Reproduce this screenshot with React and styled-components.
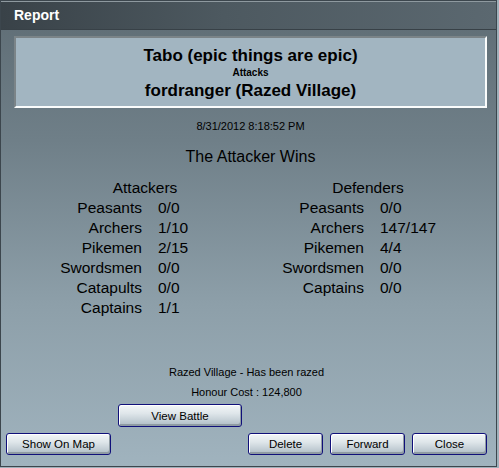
import React from "react";
import styled, { createGlobalStyle } from "styled-components";

const GlobalStyle = createGlobalStyle`
  html, body {
    margin: 0;
    padding: 0;
    background: #9fb0ba;
  }
  body {
    font-family: "Liberation Sans", Arial, sans-serif;
  }
`;

const Window = styled.div`
  box-sizing: border-box;
  width: 497px;
  height: 467px;
  border: 1px solid #3c464d;
  background: linear-gradient(#5e6c74 0%, #6f7f88 30%, #8d9fa9 65%, #a0b3be 100%);
  display: flex;
  flex-direction: column;
  overflow: hidden;
`;

const TitleBar = styled.div`
  box-sizing: border-box;
  height: 29px;
  flex: none;
  border-top: 1px solid #8e999f;
  border-bottom: 1px solid #384147;
  background: linear-gradient(90deg, #394248 0%, #4d5960 45%, #5b6870 100%);
  color: #fff;
  font-weight: bold;
  font-size: 14px;
  line-height: 27px;
  padding-left: 13px;
`;

const Body = styled.div`
  flex: 1;
  display: flex;
  flex-direction: column;
  padding: 6px 9px 0 13px;
`;

const HeaderBox = styled.div`
  box-sizing: border-box;
  height: 72px;
  border: 2px solid;
  border-color: #7b8488 #fafcfc #fafcfc #7b8488;
  background: #a2b5c1;
  display: flex;
  flex-direction: column;
  align-items: center;
  padding-top: 8px;
  color: #000;
  font-weight: bold;
`;

const Player = styled.div`
  font-size: 17px;
  line-height: 20px;
`;

const Verb = styled.div`
  font-size: 10px;
  line-height: 16px;
  margin-top: -1px;
`;

const Centered = styled.div`
  text-align: center;
  color: #000;
  font-size: ${(p) => p.size}px;
  line-height: ${(p) => p.line}px;
  margin-top: ${(p) => p.top || 0}px;
  padding-right: ${(p) => p.shift || 0}px;
`;

const Stats = styled.div`
  display: flex;
  align-items: flex-start;
  margin-top: 11px;
  padding-left: ${(p) => p.left}px;
  gap: 50px;
`;

const Side = styled.div`
  display: grid;
  grid-template-columns: ${(p) => p.label}px ${(p) => p.value}px;
  grid-auto-rows: 20px;
  column-gap: 16px;
  font-size: 15.5px;
  line-height: 20px;
  color: #000;
`;

const SideTitle = styled.div`
  grid-column: 1 / -1;
  text-align: center;
`;

const Label = styled.div`
  text-align: right;
  white-space: nowrap;
`;

const Value = styled.div`
  white-space: nowrap;
`;

const Footer = styled.div`
  margin-top: auto;
  display: flex;
  flex-direction: column;
  padding-bottom: 11px;
`;

const ButtonRow = styled.div`
  display: flex;
  align-items: center;
  gap: 7px;
  margin-top: ${(p) => p.top || 0}px;
  margin-left: ${(p) => p.left || 0}px;
`;

const Spacer = styled.div`
  flex: 1;
`;

const Button = styled.button`
  box-sizing: border-box;
  width: ${(p) => p.w}px;
  height: ${(p) => p.h || 22}px;
  padding: 0;
  border: 1px solid #10107a;
  border-radius: 3px;
  background: linear-gradient(#f3f6f8 0%, #dfe6ea 40%, #c3ced5 75%, #aebbc3 100%);
  box-shadow: inset 1px 1px 0 #ffffff, inset -1px -2px 0 #8f9ba3;
  font-family: "Liberation Sans", Arial, sans-serif;
  font-size: 11.5px;
  color: #000;
  cursor: pointer;
`;

const attackers = [
  ["Peasants", "0/0"],
  ["Archers", "1/10"],
  ["Pikemen", "2/15"],
  ["Swordsmen", "0/0"],
  ["Catapults", "0/0"],
  ["Captains", "1/1"],
];

const defenders = [
  ["Peasants", "0/0"],
  ["Archers", "147/147"],
  ["Pikemen", "4/4"],
  ["Swordsmen", "0/0"],
  ["Captains", "0/0"],
];

function Army({ title, rows, label, value }) {
  return (
    <Side label={label} value={value}>
      <SideTitle>{title}</SideTitle>
      {rows.map(([name, count]) => (
        <React.Fragment key={name}>
          <Label>{name}</Label>
          <Value>{count}</Value>
        </React.Fragment>
      ))}
    </Side>
  );
}

export default function App() {
  return (
    <>
      <GlobalStyle />
      <Window>
        <TitleBar>Report</TitleBar>
        <Body>
          <HeaderBox>
            <Player>Tabo (epic things are epic)</Player>
            <Verb>Attacks</Verb>
            <Player>fordranger (Razed Village)</Player>
          </HeaderBox>
          <Centered size={11} line={16} top={10}>
            8/31/2012 8:18:52 PM
          </Centered>
          <Centered size={16} line={20} top={13}>
            The Attacker Wins
          </Centered>
          <Stats left={46}>
            <Army title="Attackers" rows={attackers} label={82} value={72} />
            <Army title="Defenders" rows={defenders} label={84} value={76} />
          </Stats>
          <Footer>
            <Centered size={11} line={20} shift={8}>
              Razed Village - Has been razed
            </Centered>
            <Centered size={11} line={20} shift={8}>
              Honour Cost : 124,800
            </Centered>
            <ButtonRow left={104} top={2}>
              <Button w={124} h={23}>View Battle</Button>
            </ButtonRow>
            <ButtonRow left={-8} top={6}>
              <Button w={105}>Show On Map</Button>
              <Spacer />
              <Button w={75}>Delete</Button>
              <Button w={75}>Forward</Button>
              <Button w={75}>Close</Button>
            </ButtonRow>
          </Footer>
        </Body>
      </Window>
    </>
  );
}
